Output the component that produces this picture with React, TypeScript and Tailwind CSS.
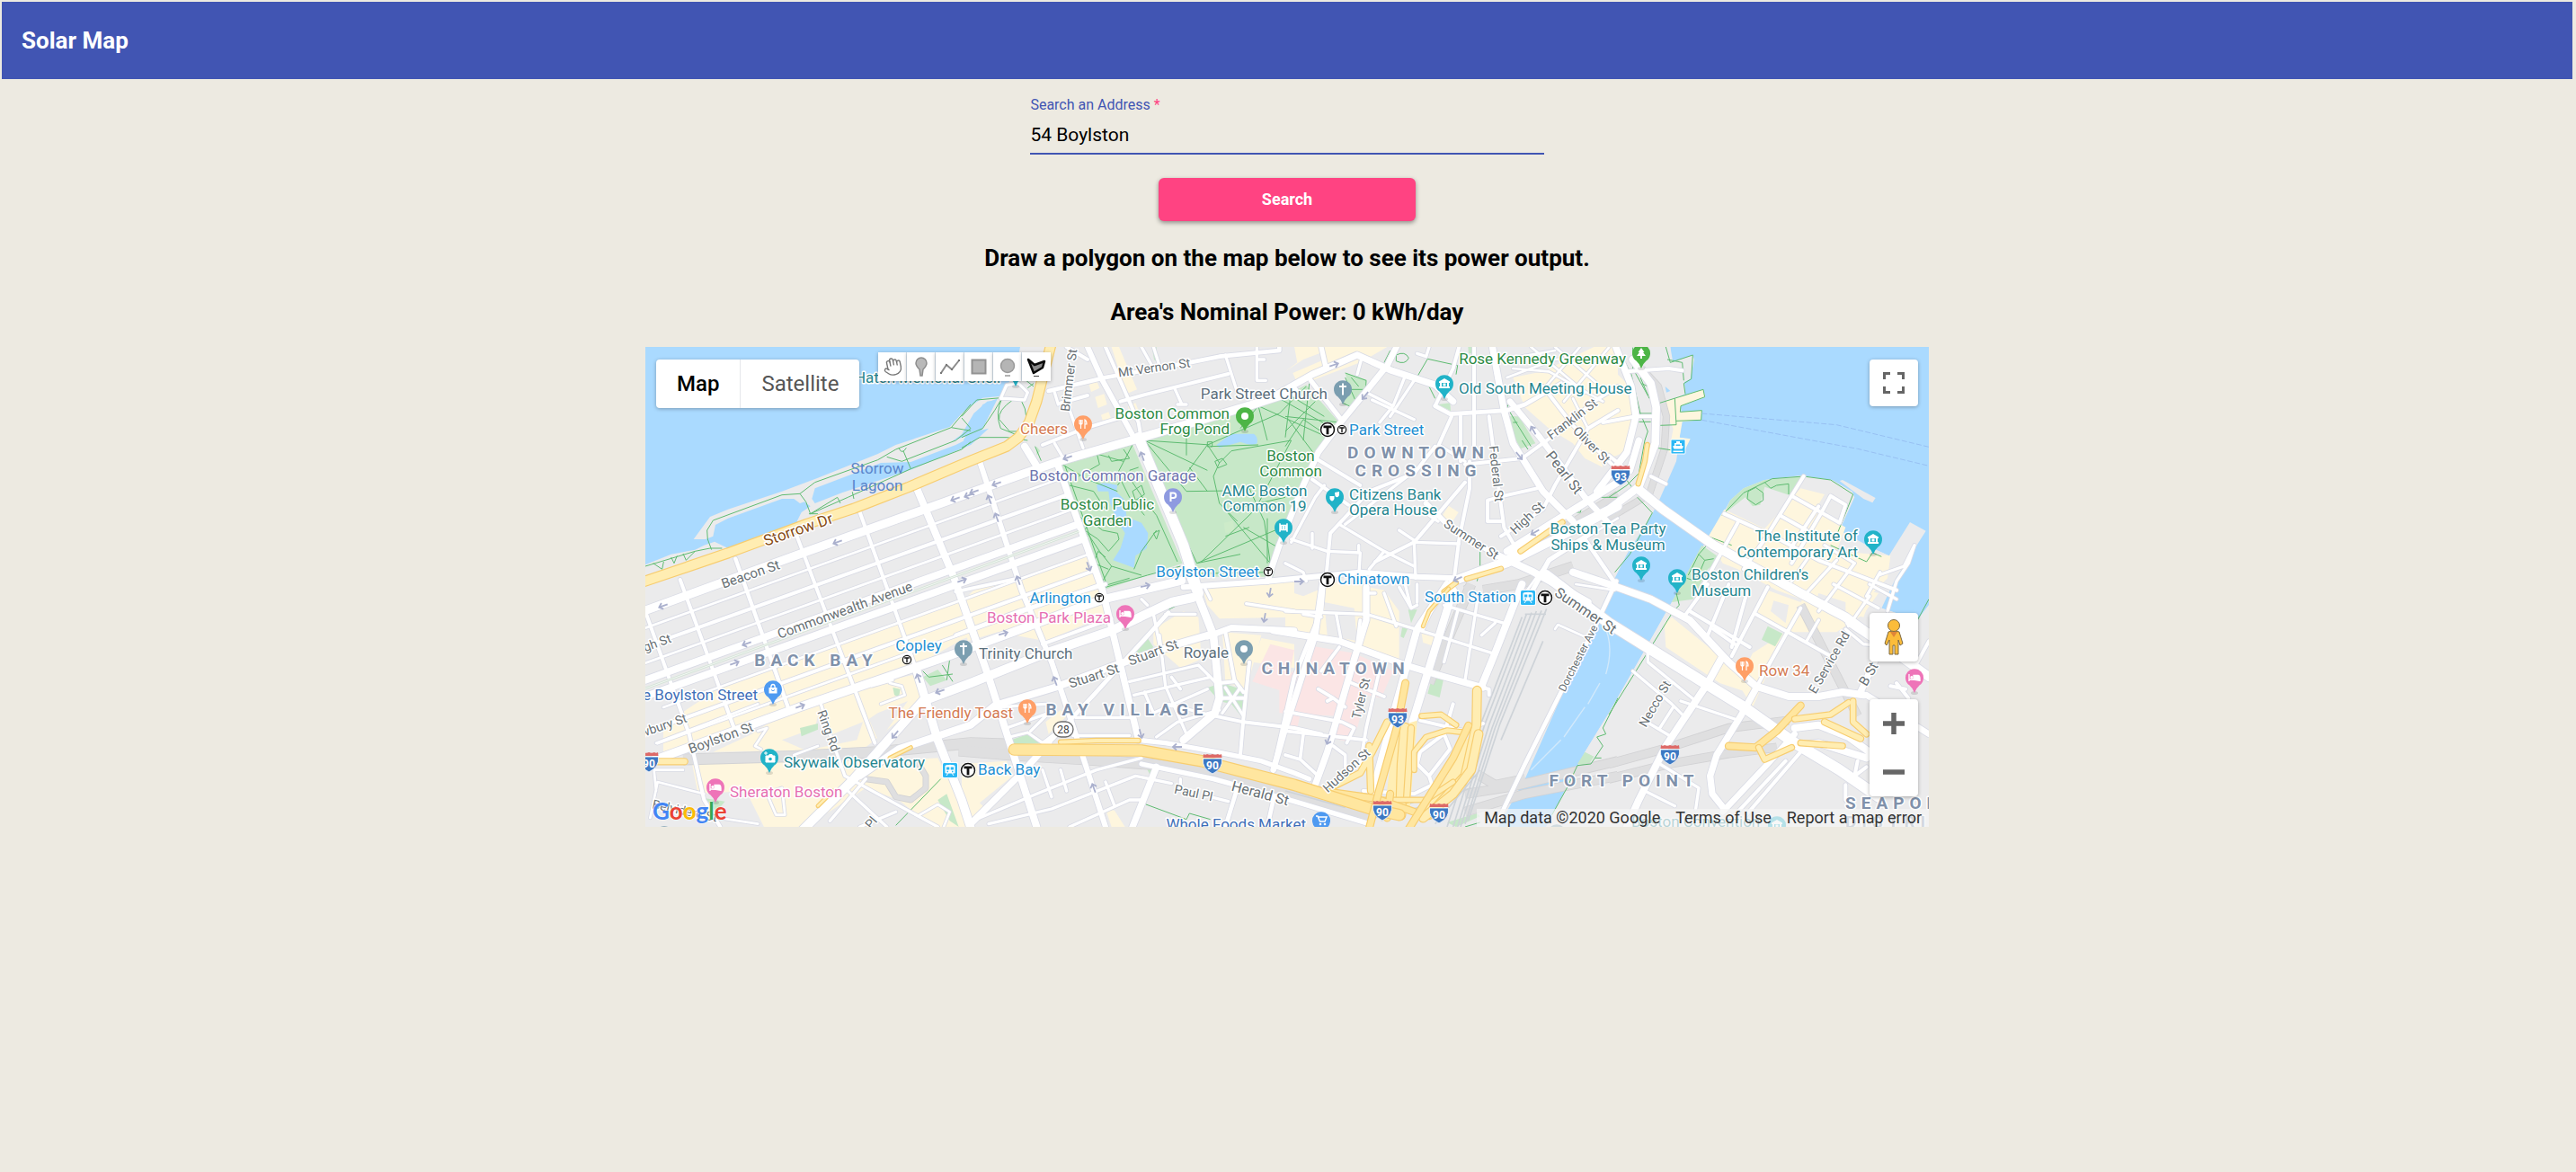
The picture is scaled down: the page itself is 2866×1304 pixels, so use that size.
import React from "react";
import { Hand } from "lucide-react";

/* The map geometry is drawn in sheets; each sheet has its own origin. */
type Sheet = "G" | "A1" | "A2" | "A3" | "A4" | "B1" | "B2" | "B3" | "B4";
const ORIGIN: Record<Sheet, string> = {
  G: "translate(0 0)",
  A1: "translate(-24 -18)",
  A2: "translate(1056 -18)",
  A3: "translate(2136 -18)",
  A4: "translate(3216 -18)",
  B1: "translate(-24 792)",
  B2: "translate(1056 792)",
  B3: "translate(2136 792)",
  B4: "translate(3216 792)",
};

const WATER = "#aadaff";
const LAND = "#ebebec";
const PARK = "#c7e8c8";
const SHOP = "#fef6de";
const RAIL = "#dfdfe0";

type Area = [Sheet, string, string];
type Line = [Sheet, number, string];

const AREAS: Area[] = [
  // Charles River and the esplanade
  ["A1", WATER, "M24,18H1375L1340,130 1300,270 1240,330 1110,385 900,470 700,540 560,595 300,695 24,790Z"],
  ["A1", LAND, "M185,660 240,585 300,560 480,500 600,455 800,375 860,345 1040,285 1080,240 1110,215 1150,188 1205,183 1235,140 1260,95 1275,18H1400L1320,300 1230,350 1110,400 900,490 560,610 530,600 545,570 575,550 555,535 540,540 520,525 480,525 300,590 258,612 250,650 225,660Z"],
  ["A1", LAND, "M24,745 110,710 190,695 220,680 255,668 300,690 60,790 24,800Z"],
  ["A1", WATER, "M580,525 590,490 720,440 810,405 910,402 1060,345 1110,320 1140,280 1180,220 1195,195 1165,200 1120,240 1080,310 1045,335 1130,300 1170,290 1110,345 910,428 680,505 590,540Z"],
  ["A1", WATER, "M1085,330 1110,290 1150,210 1200,190 1150,290 1110,345Z"],
  // Back Bay shopping strips
  ["G", SHOP, "M60,1262 260,1130 1480,690 1528,812 1440,838 1060,975 860,1090 520,1205 60,1375Z"],
  ["B1", SHOP, "M380,500 470,440 600,400 790,330 930,300 950,360 900,430 740,560 500,555 250,560Z"],
  ["B1", LAND, "M480,520 590,480 600,440 620,470 650,500 750,460 730,520 560,555Z"],
  ["B1", SHOP, "M180,600 700,590 830,590 1000,580 1060,700 1110,720 1110,810 980,810 870,720 760,680 560,810 420,810 360,690 200,700Z"],
  ["B1", LAND, "M280,730 360,710 390,810 270,810Z"],
  ["B1", LAND, "M800,430 900,390 820,500 800,520 770,450Z"],
  ["B1", PARK, "M950,310 1000,285 1030,320 975,340Z M850,345 875,350 870,378 855,370Z M540,480 600,465 600,485 545,508Z M1000,720 1030,700 1070,810 1040,790Z M225,715 290,725 260,760Z"],
  ["B2", SHOP, "M0,60 40,20 140,-10 190,60 280,40 460,-10 490,100 280,190 120,160 20,190Z"],
  ["B2", SHOP, "M640,150 740,90 790,110 800,250 730,280 640,200Z M800,0 1110,-10 1110,110 860,115 820,70Z M870,160 1000,170 950,350 880,330Z M1000,180 1110,200 1110,280 970,260Z"],
  ["B2", SHOP, "M280,460 330,420 350,440 290,500Z M0,600 150,590 170,640 60,730 80,750 30,810 0,810Z M480,750 510,755 545,810 500,810Z"],
  ["B2", PARK, "M165,520 220,500 265,530 175,535Z M580,230 620,180 640,210 600,240Z M820,345 870,330 945,355 940,450 900,400 860,390Z M615,610 640,610 630,640Z"],
  // Public Garden and the Common
  ["A2", PARK, "M325,405 568,338 737,740 470,830Z"],
  ["A2", PARK, "M605,325 780,275 1060,190 1150,145 1255,265 1190,360 1140,460 1080,600 1040,785 785,785 735,650Z"],
  ["A2", "#cdebc9", "M875,605 905,598 912,632 880,640Z"],
  ["A2", WATER, "M450,480Q470,465 520,480L515,500 545,530 550,585 600,605 622,640 618,690 580,715 575,755 505,730 530,690 545,640 520,600 495,540 490,500 455,500Z"],
  ["A2", WATER, "M850,345 900,308 975,308Q990,318 986,340 970,350 930,335L860,355Z"],
  ["A2", PARK, "M635,18 650,18 652,70 642,60Z M250,350 262,365 250,380Z"],
  ["A2", SHOP, "M500,18 525,18 585,160 550,175Z M425,145 450,130 460,155 432,168Z M445,185 475,175 485,210 455,222Z M465,245 490,235 500,262 472,268Z M555,215 580,205 590,230 560,240Z M1080,100 1140,60 1250,18H1110L1120,70Z"],
  // Downtown
  ["A3", SHOP, "M25,105 130,60 120,18H340L250,70 90,130 40,140Z M760,120 860,100 1030,18 1110,18 1110,230 1020,250 1060,420 1000,390 960,340 880,290 800,220Z"],
  ["A3", SHOP, "M525,580 545,548 578,570 560,598 540,600Z"],
  ["A3", PARK, "M200,105 272,128 262,165 225,220 190,205 215,160Z M740,250 780,250 835,340 785,358 760,310Z M510,210 550,205 552,232Z M610,18H625V40H612Z"],
  // Chinatown and the medical area
  ["B3", SHOP, "M0,20 60,40 180,-10 330,20 380,90 380,250 250,210 60,180 0,170Z M455,165 500,170 490,205 460,195Z"],
  ["B3", LAND, "M130,60 230,80 240,190 140,170Z"],
  ["B3", "#fbe5e5", "M80,205 230,230 360,290 320,380 270,370 240,480 205,525 165,515 180,440 -20,430 -20,320 60,270Z M10,430 50,435 40,480 5,480Z"],
  ["B2", "#fbe5e5", "M1030,200 1110,220 1080,360 970,325Z"],
  ["B3", PARK, "M490,310 528,318 515,378 475,365Z M390,145 410,145 395,180 385,175Z M410,85 440,85 420,130Z"],
  // Harbor and Fort Point Channel
  ["A4", WATER, "M205,18H1068V880L1030,930 880,880 955,790 935,715 880,690 700,700 380,600 330,655 265,780 210,870 120,1030 0,1240 -80,1370 -210,1620H-370L-280,1460 -60,960 20,790 60,710 145,575 170,525 225,400 245,250Z"],
  ["A4", LAND, "M180,18H205L208,70 280,45 285,60 272,125 252,135 255,175 200,200 170,120Z"],
  ["A4", SHOP, "M170,205 315,160 322,185 240,215 238,235 310,230 308,262 245,268 236,320 272,325 250,370 200,370 215,290Z M-110,120 -20,60 60,140 90,250 50,370 -20,400 -110,230Z"],
  ["A4", WATER, "M188,150 205,165 192,170Z"],
  ["A4", LAND, "M378,580 405,530 450,490 520,462 640,447 745,462 812,500 820,520 770,630 880,690 935,715 1005,603 1058,632 955,795 910,890 1030,930 1068,880 1068,1700 -210,1700 -80,1370 0,1240 120,1030 210,870 265,780 330,655Z"],
  ["A4", LAND, "M770,465 780,462 890,522 880,538 850,525Z"],
  ["A4", PARK, "M405,530 450,490 520,462 650,450 610,515 520,485 505,545 480,550 455,520 385,575Z"],
  ["A4", SHOP, "M330,655 385,560 520,625 640,490 720,510 690,560 790,620 760,700 940,715 930,790 880,840 850,920 700,880 560,830 430,760 380,740Z"],
  ["A4", PARK, "M310,680 375,725 330,760 280,860 210,870Z"],
  ["B4", SHOP, "M185,130 210,110 370,240 490,350 460,360 370,330 190,210Z M530,20 640,60 700,-20 900,30 850,100 760,160 600,160 490,100Z M480,230 590,160 480,410 430,330Z"],
  ["B4", LAND, "M550,55 600,70 590,130 540,90Z M700,30 790,60 790,100 690,60Z"],
  ["B4", PARK, "M530,140 580,165 555,208 510,185Z"],
  ["B3", PARK, "M1000,560 1030,575 1010,605 975,600Z M540,795 640,765 650,775 570,810Z"],
];

const RAILS: Line[] = [
  ["B1", 34, "M150,585 500,575 800,560 1110,530 1250,535"],
  ["B2", 34, "M-10,555 170,570 420,585 620,600 840,620 1110,710 1360,780"],
  ["B4", 30, "M-420,20 -300,0 -120,-60 M-460,0 -600,330"],
  ["B4", 26, "M-460,10 -480,20 M0,600 200,545 400,480 600,455"],
  ["B4", 26, "M0,650 200,600 400,565 560,545 M640,70 830,440"],
  ["B3", 28, "M600,700 760,675 1110,590 M600,760 800,700 1110,640 M650,640 700,670 800,650"],
  ["A4", 20, "M110,90 165,150 192,250 185,360 135,510 0,590"],
  ["A3", 22, "M760,740 900,640 1110,510"],
  ["B1", 16, "M760,650 830,660 860,710 910,720 960,680 960,640 930,590"],
];

const TRACKS = [
  "M790,110 655,460 540,810", "M805,100 665,470 560,810", "M822,95 680,470 575,810",
  "M838,90 690,480 585,810", "M855,88 700,480 600,800", "M872,82 715,470 610,790",
  "M860,190 720,520", "M800,100H870", "M0,660 280,745 M0,675 280,760 M0,690 200,745",
  "M300,780 640,640 M320,790 620,680 M500,800 650,620",
];

const ROADS: Line[] = [
  // Back Bay, along the river
  ["G", 8, "M0,938 1392,437"], ["G", 12, "M0,1000 1412,492"], ["G", 8, "M0,1055 1429,541"],
  ["G", 24, "M0,1112 1447,591"], ["G", 24, "M0,1167 1464,640"], ["G", 8, "M60,1203 1483,691"],
  ["G", 12, "M0,1286 1502,745"], ["G", 8, "M40,1324 1519,791"], ["G", 28, "M0,1390 516,1202 1016,1030 1420,880 1526,843 1790,780"],
  ["G", 28, "M0,880 536,684 1266,422 1396,377 1636,308 1836,250 2016,196 2166,147"],
  // Back Bay, across
  ["G", 12, "M-4,872 146,1292 196,1512 250,1602"], ["G", 12, "M116,777 296,1272"], ["G", 13, "M301,707 476,1202"],
  ["G", 12, "M506,632 766,1322"], ["G", 12, "M716,552 906,1082"], ["G", 28, "M906,1082 976,1312 1056,1512 1085,1602"],
  ["G", 24, "M906,472 1030,770 1146,1102 1306,1602"], ["G", 18, "M1116,382 1256,812 1356,1052 1436,1292 1536,1602"],
  ["G", 24, "M1266,332 1306,397"], ["G", 22, "M1376,392 1526,812 1646,1312"],
  // South of Boylston
  ["B1", 30, "M540,830 720,650 950,390 1110,330 1360,230 1580,155 1780,60 1850,45"],
  ["B1", 24, "M740,640 870,550 1110,470 1190,405 1390,345 1580,275 1800,200 1920,165"],
  ["B1", 10, "M610,400 640,500 690,640 M690,640 1000,810 M760,650 640,790 M700,690 830,810 M860,760 740,810"],
  ["B1", 8, "M60,530 400,400 M55,620H150 M65,660 220,700 M65,660 40,780 M60,690 50,590 M450,690 480,680 490,770 460,770 430,700 M400,490 430,480 390,540 410,550 M520,570 600,540 M940,770 1000,735 1040,760 1020,810 M270,780 400,800 M780,340 850,320 M810,400 890,370 880,340 840,330"],
  ["B2", 14, "M290,530 440,370 540,260 690,95"], ["B2", 26, "M765,-20 840,170 860,380 845,430 740,520"],
  ["B2", 20, "M820,175 900,145 1110,155"], ["B2", 12, "M270,200 500,115 M-20,25 190,-20 M-20,170 190,90 480,0"],
  ["B2", 10, "M380,445H570 M370,505H560 M560,325 790,270 850,330 M575,370 830,310 M610,360 640,430 820,350 M660,170 680,340 750,500 M690,400 840,440 M700,310 730,350 M650,510 720,460 860,420 M640,100 660,200 670,250 M680,100H780"],
  ["B2", 10, "M150,480 290,430 M160,510 220,495 270,530 310,500 M230,490 290,430 M130,410 280,400"],
  ["B2", 12, "M845,440 940,460 1110,480 1200,500 M940,450 930,570 M960,260 940,450 M880,160 910,320 940,360 M860,330 910,325 M870,380H940"],
  ["B2", 10, "M880,345 940,440 M930,345 870,430 M600,50 620,70 M810,10 830,50 M950,65 1110,90"],
  ["B2", 16, "M590,520 680,530 850,560 1000,590 1110,630 1160,650"], ["B2", 16, "M600,600 840,650 1110,725 1360,800"],
  ["B2", 10, "M60,780 250,700 450,620 600,580 M90,800 300,750 580,640 700,665 M270,620 300,710 M330,620 350,690 M480,660 510,740 M360,810 560,720 610,720 M730,650 730,690 M830,710 890,725"],
  ["B2", 22, "M30,800 210,620 290,530 M650,610 570,810"], ["B2", 14, "M920,680 880,810 M1040,720 1020,810"],
  ["B2", 14, "M1040,620 1110,310 1200,90 1210,-30"],
  // Beacon Hill
  ["A2", 14, "M290,165 480,120 760,70 860,50 1060,30V18"], ["A2", 12, "M270,345 410,290 560,245 M330,205 420,180 M530,200 620,175 890,108"],
  ["A2", 18, "M420,18 470,130 580,330"], ["A2", 12, "M480,18 590,270 600,330 M350,18 420,60"],
  ["A2", 10, "M350,200 405,355 M310,170 322,210 M310,340 345,400 M600,18 640,90 M710,155 735,210 M720,210H750 M880,45 920,170 M985,18V130H1015 M985,60H1010 M390,380 690,300 M640,18 660,80"],
  ["A2", 34, "M590,320 740,680 790,840"], ["A2", 10, "M130,190 150,145 190,140 220,170 210,195 150,190Z"],
  // Downtown
  ["A3", 22, "M-60,195 90,110 240,45 350,95 500,145 560,200"], ["A3", 20, "M375,10 340,80 185,270 110,370 60,480 -20,680 -60,800"],
  ["A3", 16, "M85,130 190,265 M118,10 135,85"],
  ["A3", 10, "M255,55 240,110 M400,115 360,215 315,270 M280,175 360,215 M290,195 430,260 M430,130 350,250 M440,40 470,50 480,18"],
  ["A3", 14, "M500,215 550,242 740,230 800,210 920,140"], ["A3", 12, "M500,215 560,90 580,18 M630,10V390 M555,250 510,350 M585,250V400"],
  ["A3", 22, "M690,10 730,230 760,340 860,500 960,600"], ["A3", 12, "M680,250 700,400 730,620 770,690 M600,410 790,390 900,310 1030,200 1110,150"],
  ["A3", 12, "M615,400V490L580,660 565,780 M600,470 430,670 300,735 M110,395 250,480 M90,460 210,545 M500,350 430,440 280,500 150,640 135,800"],
  ["A3", 10, "M420,440 200,610 M520,350 600,400 M510,600 450,560 M380,630 440,670 M180,610 330,700 430,750 M430,670 580,675 M430,670 435,790 M330,700 280,760 M20,660 140,700 250,705 245,790 M90,640V690 M0,740 60,770 70,800 M20,670 100,520 130,480 M245,680V700"],
  ["A3", 18, "M470,540 550,620 700,710"], ["A3", 18, "M-340,820 -60,800 250,770 440,785 570,790 730,730 900,620"],
  ["A3", 28, "M560,800 740,740 980,620 1110,550"], ["A3", 24, "M700,710 830,770 1010,870"],
  ["A3", 24, "M740,700 900,600 1110,470"], ["A3", 20, "M750,200 850,320 1000,520 1110,640"],
  ["A3", 12, "M860,150 960,280 1080,400 1130,450 M840,490 730,515 675,530V600H725 M720,650 860,560 900,480 1010,290 1110,230"],
  ["A3", 8, "M740,120 900,60 1110,50 M760,90 880,100 1060,200 M820,18 1000,170 M900,18 1040,140 M990,10 870,150 M1080,20 930,200 M960,190 1010,290 M730,60 900,30 M800,840 880,730 1110,590 M970,810 1100,830"],
  ["A3", 16, "M820,840 880,730 1020,640"], ["A3", 14, "M1000,660 1110,820"],
  // Chinatown and the artery
  ["B3", 22, "M-40,155 180,190 400,270 500,300 660,345"], ["B3", 20, "M125,-10 100,170 0,480 -40,620"], ["B3", 22, "M270,10 270,120 230,250 140,560 100,670"],
  ["B3", 24, "M540,0 440,150 370,400 290,700"], ["B3", 26, "M560,20 480,280 425,460"], ["B3", 24, "M790,0 700,230 655,340"],
  ["B3", 10, "M0,90 270,100 500,170 690,230 M575,90 530,260 M640,60 600,320 M530,70 730,130 M700,130 655,170 M330,30 370,140 M400,0 420,80 M170,100 185,180 M120,110 60,100 M380,10 420,80 440,70 M440,0V60 M500,60 460,150 M270,30H300"],
  ["B3", 11, "M325,240 270,480 250,600 M210,325 330,375 M0,425 190,460 M0,490 270,520 M190,460 230,480 205,530 M60,500 50,580 M0,570 50,585 110,640 M180,210 120,290 M110,350 160,380 M160,380 140,390 M160,380 200,410 M160,540 200,570 200,610 M250,120 240,200"],
  ["B3", 12, "M560,400 530,500 550,550 480,640 440,600 450,560 530,500 M480,640 490,670 430,700 260,690"],
  ["B3", 12, "M450,455 600,490 660,465 M680,370V350L650,345"],
  ["B3", 8, "M900,150 910,135 1010,180"], ["B3", 14, "M1105,-10 1030,150 920,360 800,600 710,790"],
  // Waterfront
  ["A4", 22, "M20,10 75,150 90,250 60,370 -40,500"], ["A4", 26, "M80,60 140,140 158,220 155,340 100,485 0,560 -120,620"],
  ["A4", 22, "M100,330 70,430"], ["A4", 12, "M60,100 200,90 245,97 M90,250H160 M140,450 190,475 M0,380 60,430 M-20,270 90,250"],
  ["A4", 30, "M95,490 180,560 350,680 640,840 790,920 1070,1120"], ["A4", 12, "M385,575 540,645 700,730 960,830"],
  ["A4", 12, "M650,450 520,660 450,760 M430,605 300,840 M610,515 770,605 790,545 740,515 710,570 610,740 M570,580 660,630 M700,550 600,700"],
  ["A4", 10, "M820,740 700,900 M905,770 860,850 M1020,680 1000,740 960,800 930,900 M1020,680 985,750 900,780 M720,680 820,740 M760,730 650,850 M680,700 610,800"],
  // Fort Point
  ["B4", 24, "M-120,-40 0,0 140,50 270,120 400,260 490,340 600,375 700,375 780,360 850,370"],
  ["B4", 36, "M-210,-30 0,130 120,205 320,330 450,410 620,530 770,620 900,710"],
  ["B4", 24, "M380,240 330,330 190,540 100,720 60,810"], ["B4", 22, "M490,350 440,440 360,570 338,640 345,700 385,750"], ["B4", 20, "M620,500 530,600 380,760"],
  ["B4", 12, "M330,0 250,110 M270,90 470,210 M400,0 330,170 M460,30 410,210 M530,10 410,240 M490,100 740,240 M640,80 500,330 M350,150 420,200"],
  ["B4", 10, "M80,290 210,400 250,440 M130,220V260L290,390 M240,390 420,450 M110,450 210,510 M215,410 170,480 M170,600 300,680 290,750 M120,690 220,740 M750,0 900,80 M870,40 800,140 M870,0 960,50 M700,120 660,190 M790,150 850,200 M850,200 950,210"],
  ["B4", 22, "M840,360 890,250"], ["B4", 24, "M620,540 700,530 860,580 M620,480 700,470 800,510 870,560"],
  ["B4", 20, "M800,130 1070,310 M860,370 1068,500"], ["B4", 12, "M640,560 450,780 M590,590 430,760 M1068,190 1030,260 M960,330 1000,380 M940,340 990,350 M830,590 820,640 860,610 M790,670V720"],
];

const HIGHWAYS: Line[] = [
  ["A1", 30, "M20,801 300,706 560,610 720,557 900,487 1110,398 1230,350 1270,320 1305,270 1330,200 1355,100 1378,10"],
  ["B1", 18, "M60,592H155"],
  ["B2", 12, "M330,527 450,522 590,522"],
  ["B3", 26, "M640,355 638,470 600,640 480,770"],
  ["B3", 30, "M400,480 390,600 385,770"], ["B3", 18, "M420,480 410,640 405,720"],
  ["B3", 14, "M430,620 430,560 470,510 540,488 600,495 M455,440 520,435 570,470"],
  ["B3", 18, "M340,460 290,560 250,630 150,680 M280,540 285,690"],
  ["B3", 26, "M645,500 620,620 560,700 460,780"], ["B3", 14, "M560,660 470,720 300,720"],
  ["B3", 20, "M120,690 300,715 430,760 M350,700 340,780"],
  ["B2", 34, "M175,552 600,555 800,590 1110,670 1360,748 1460,770"],
  ["B3", 20, "M401,330 372,480 310,700 280,815"], ["B3", 20, "M611,472 560,580 410,820"],
  ["A3", 14, "M785,700 925,603"], ["A3", 12, "M605,792 720,758 M570,805 530,835"], ["A4", 12, "M128,345 120,400 98,475"],
  ["B3", 8, "M545,15 480,90 460,140"], ["B4", 20, "M400,540 490,545 560,490 640,405"], ["B4", 16, "M620,450 740,435 800,395 M815,390V460L860,500"],
  ["B4", 18, "M720,460 840,515"], ["B4", 16, "M640,530 780,540 M500,545 520,585 610,545"], ["B1", 8, "M840,580 910,545 M600,740 650,690"],
];

const PATHS: [Sheet, string][] = [
  ["A1", "M24,750 190,700 240,690 280,690 M232,660 230,630 250,597 480,512 540,508 590,470 800,395 860,360 1045,287 1110,210 M232,660 245,695 M540,508 560,535 575,575 700,520 910,425 1080,360 1110,335 M830,385 880,400 1060,330 1110,290 1080,255 M1045,287 1110,298 M885,365 910,425 M870,355 Q880,380 895,355 M50,740 80,760 85,735 M110,720 120,740 130,715 M150,708 160,730 190,700 M575,575 665,520 675,540 M715,502 720,525 M600,575H570"],
  ["A2", "M0,250 50,195 130,188 M0,320 70,290 110,230 135,188 Q110,240 130,290 L180,310 M170,195 Q120,230 125,260 L160,300 200,300 Q230,250 200,200 M0,355 60,320 150,320 220,330 M245,350 265,398 M215,130 240,150 M220,155 240,140"],
  ["A2", "M335,410 565,345 M345,415 480,800 M335,410 420,460 520,500 M450,370 460,410 390,450 M490,380 500,400 560,390 540,360 M450,375 540,400 M520,480 550,440 610,530 650,580 720,735 M570,345 520,440 560,520 610,580 M570,500 600,480 610,510 580,530Z M560,430 590,420 M470,800 500,750 600,780 M500,750 460,700 420,640 M455,660 410,630 430,600 470,630 520,640 525,660 490,700Z M440,740 490,760 M440,740 455,700 480,720 M360,480 440,500 480,560 M370,530 440,560 M650,630 600,700 575,760 M640,640 660,630 650,660Z M380,570 420,610 M480,820 620,780 730,750"],
  ["A2", "M610,330 820,430 M610,330 750,500 900,498 M610,330 830,345 M750,290V380 M820,345 750,440 M820,345 1060,240 1150,150 M820,345 860,405 840,450 860,540 920,600 M845,400 870,390 885,410 855,422Z M860,405 900,365 1100,330 M990,215 1020,330 M990,215 930,290 M990,215 1200,310 M1060,190 1240,290 M1090,260 1180,380 M830,350 990,345 M820,500 760,420 M700,560 785,740 M785,740 1070,620 M785,740 930,710 M800,735 980,560 1100,330 M870,550 1030,740 M1030,740 1010,600 960,490 M900,560 1080,520 M940,620 1060,690 M1020,740 1020,590 M780,775 1030,770 M880,650 960,620 M820,335h16v16h-16Z"],
  ["A3", "M0,170 130,250 M0,250 180,270 M20,160 0,320 M80,140 60,330 M100,200 0,300 M0,350 60,260 120,300 M200,105 270,130 Q275,160 225,220 L190,205 M200,120 240,210 M215,160H265 M220,120 245,150 M350,30 330,70 M370,45Q400,30 412,55 Q400,80 370,65Z M355,85 440,118 500,145 540,160 M440,118 475,58 575,80 570,110 M480,150 500,190 M735,210 770,270 820,350 M750,200 735,230 M760,270H775 M790,330 810,360 M1020,520 1110,520 M950,570 985,570 990,545 M650,690 650,760 640,800"],
  ["A4", "M190,18 205,70 280,45 275,125 250,140 255,175 M195,60 245,70 250,130 M170,205 315,160 320,185 240,215 238,235 310,230 308,262 225,265 M170,280 225,278 220,190 M100,240H150 M100,268H140 M160,355 225,365 M75,110 105,240 130,300 120,330 100,440 60,480 0,520 M80,20V90L130,180 M105,120 135,190 M50,60 75,110 M110,140 130,150 M95,520 145,572 70,710 20,770 M50,450 80,490"],
  ["A4", "M378,580 450,505 545,458 650,450 740,462 815,510 765,635 M465,500 490,487 515,505 515,530 490,545 462,525Z M520,470 540,490 560,480 600,475 600,510 M330,650 410,680 M345,660 300,710 265,780 M300,710 320,730 350,725 M320,730 290,800 260,790 M740,680 860,735 880,705 910,718"],
  ["B4", "M225,30 235,70 215,90 0,435 M1068,50 1030,120"],
  ["B3", "M1110,380 1060,480 1070,500 1040,510 1060,540 1020,600 975,605 940,680 890,770 M1035,580H1055 M600,810 650,795"],
  ["B1", "M950,290 970,310 1050,300 M1015,270 1050,325 M1040,250 1030,320 M860,805 1010,650"],
  ["B2", "M460,10 560,-20 M615,735 750,785 760,765 830,785 M690,85 720,70"],
];

const FERRIES: [Sheet, string][] = [
  ["A4", "M310,240 760,278 1068,352"], ["A4", "M310,262 830,358 1068,415"],
];

const ARROWS: [number, number, number][] = [
  [214, 217, 160], [345, 169, 160], [360, 165, 160], [366, 161, 160], [391, 152, 160], [470, 123, 160],
  [383, 170, 250], [391, 190, 250], [415, 260, 250], [553, 122, 250], [493, 244, 70], [556, 266, -12],
  [20, 288, 160], [113, 330, 160], [99, 352, -20], [172, 400, -20], [304, 369, 250], [328, 383, 160],
  [278, 431, 130], [398, 319, -15], [456, 372, 250], [551, 430, 75], [592, 445, 180], [499, 491, 250],
  [689, 301, 100], [695, 273, 100], [766, 20, -18], [801, 54, 130], [988, 93, 240], [972, 121, 50],
  [990, 206, 150], [904, 258, 155], [727, 261, 0], [760, 437, 110], [352, 260, -20],
];

const GREEN = "fill-[#2c8a44]";
const TEAL = "fill-[#26868f]";
const SLATE = "fill-[#5c6f7c]";
const BLUE = "fill-[#1f8fd2]";
const ORANGE = "fill-[#d47a52]";
const PINK = "fill-[#e66fb2]";
const STREET = "fill-[#687074]";
const SHOPBLUE = "fill-[#3f6fb8]";

type Anchor = "start" | "middle" | "end";
const PLACES: [string, number, number, Anchor, string][] = [
  ["Hatch Memorial Shell", 314, 40, "middle", TEAL],
  ["Storrow", 258, 141, "middle", "fill-[#5a85cb]"], ["Lagoon", 258, 160, "middle", "fill-[#5a85cb]"],
  ["Park Street Church", 759, 58, "end", SLATE],
  ["Boston Common", 650, 80, "end", GREEN], ["Frog Pond", 650, 97, "end", GREEN],
  ["Cheers", 470, 97, "end", ORANGE],
  ["Boston Common Garage", 520, 149, "middle", "fill-[#6f75ae]"],
  ["Boston Public", 514, 181, "middle", GREEN], ["Garden", 514, 199, "middle", GREEN],
  ["Boston", 718, 127, "middle", GREEN], ["Common", 718, 144, "middle", GREEN],
  ["AMC Boston", 689, 166, "middle", TEAL], ["Common 19", 689, 183, "middle", TEAL],
  ["Boylston Street", 683, 256, "end", BLUE], ["Park Street", 783, 98, "start", BLUE],
  ["Citizens Bank", 783, 170, "start", TEAL], ["Opera House", 783, 187, "start", TEAL],
  ["Rose Kennedy Greenway", 1091, 19, "end", GREEN], ["Old South Meeting House", 905, 52, "start", TEAL],
  ["Chinatown", 770, 264, "start", BLUE],
  ["Boston Tea Party", 1071, 208, "middle", TEAL], ["Ships & Museum", 1071, 226, "middle", TEAL],
  ["The Institute of", 1349, 216, "end", TEAL], ["Contemporary Art", 1349, 234, "end", TEAL],
  ["Boston Children's", 1164, 259, "start", TEAL], ["Museum", 1164, 277, "start", TEAL],
  ["Copley", 304, 338, "middle", BLUE], ["e Boylston Street", 125, 393, "end", SHOPBLUE],
  ["The Friendly Toast", 409, 413, "end", ORANGE], ["Skywalk Observatory", 154, 468, "start", TEAL],
  ["Sheraton Boston", 94, 501, "start", PINK], ["Trinity Church", 371, 347, "start", SLATE],
  ["Arlington", 496, 285, "end", BLUE], ["Boston Park Plaza", 518, 307, "end", PINK],
  ["Royale", 649, 346, "end", SLATE], ["Back Bay", 370, 476, "start", BLUE],
  ["Whole Foods Market", 735, 537, "end", SHOPBLUE], ["South Station", 969, 284, "end", BLUE],
  ["Row 34", 1239, 366, "start", ORANGE], ["Boston Convention", 1097, 534, "start", TEAL],
];

const DISTRICTS: [string, number, number, Anchor][] = [
  ["DOWNTOWN", 860, 124, "middle"], ["CROSSING", 860, 144, "middle"], ["BACK BAY", 190, 355, "middle"],
  ["BAY VILLAGE", 536, 410, "middle"], ["CHINATOWN", 768, 364, "middle"], ["FORT POINT", 1089, 489, "middle"],
  ["SEAPORT", 1335, 514, "start"], ["DISTRICT", 1335, 535, "start"],
];

const STREETS: [string, number, number, number, string][] = [
  ["Beacon St", 117, 253, -19, "text-[15px]"], ["Commonwealth Avenue", 222, 293, -20, "text-[15px]"],
  ["gh St", 13, 329, -20, "text-[14px]"], ["wbury St", 20, 421, -19, "text-[14px]"],
  ["Boylston St", 84, 435, -20, "text-[15px]"], ["Ring Rd", 204, 427, 70, "text-[14px]"],
  ["Belvidere St", 44, 516, 12, "text-[14px]"], ["Pl", 251, 529, -50, "text-[14px]"],
  ["Brimmer St", 471, 37, -83, "text-[14px]"], ["Mt Vernon St", 566, 23, -8, "text-[14px]"],
  ["Federal St", 947, 141, 84, "text-[14px]"], ["Franklin St", 1031, 80, -37, "text-[14px]"],
  ["Oliver St", 1053, 109, 45, "text-[14px]"], ["Pearl St", 1022, 140, 52, "text-[16px]"],
  ["High St", 981, 190, -43, "text-[14px]"], ["Summer St", 919, 214, 33, "text-[14px]"],
  ["Stuart St", 499, 366, -18, "text-[15px]"], ["Stuart St", 565, 340, -20, "text-[15px]"],
  ["Paul Pl", 610, 496, 12, "text-[14px]"], ["Herald St", 684, 497, 15, "text-[16px]"],
  ["Tyler St", 796, 391, -76, "text-[14px]"], ["Hudson St", 780, 471, -42, "text-[14px]"],
  ["Dorchester Ave", 1037, 346, -63, "text-[12px]"], ["Summer St", 1046, 294, 34, "text-[16px]"],
  ["E Service Rd", 1317, 351, -60, "text-[14px]"], ["B St", 1361, 364, -60, "text-[15px]"],
  ["Necco St", 1123, 397, -60, "text-[14px]"],
];

type Glyph = "food" | "dot" | "P" | "film" | "museum" | "cross" | "mask" | "tree" | "bag" | "camera" | "bed" | "cart";
const PIN: Record<string, string> = {
  orange: "#ff9f67", green: "#4db546", purple: "#8e9ae0", teal: "#21b3c8",
  slate: "#7b9eb0", blue: "#4e9af1", pink: "#ee74b8",
};
const PINS: [number, number, string, Glyph][] = [
  [412, 27, "teal", "dot"], [487, 86, "orange", "food"], [667, 77, "green", "dot"], [587, 167, "purple", "P"],
  [710, 201, "teal", "film"], [889, 41, "teal", "museum"], [776, 47, "slate", "cross"], [767, 167, "teal", "mask"],
  [1108, 7, "green", "tree"], [1108, 243, "teal", "museum"], [1148, 257, "teal", "museum"], [1366, 214, "teal", "museum"],
  [142, 381, "blue", "bag"], [354, 336, "slate", "cross"], [138, 457, "teal", "camera"], [78, 490, "pink", "bed"],
  [21, 543, "slate", "dot"], [534, 297, "pink", "bed"], [425, 402, "orange", "food"], [666, 336, "slate", "dot"],
  [752, 527, "blue", "cart"], [1223, 355, "orange", "food"], [1412, 368, "pink", "bed"], [1259, 532, "teal", "museum"],
  [1014, 541, "slate", "dot"],
];

const GLYPHS: Record<Glyph, React.ReactNode> = {
  food: <path d="M-4 -5v4q0 1 1.500 1v5M-2.500 -5v5M-1 -5v4q0 1 -1.500 1M2 5v-10q2 1 2 5h-2" stroke="#fff" strokeWidth="1.200" fill="none" />,
  dot: <circle r="4" fill="#fff" />,
  P: <path d="M-2.500 5v-9.500h3a2.800 2.800 0 0 1 0 5.600h-3" stroke="#fff" strokeWidth="2" fill="none" />,
  film: <path d="M-5 -5h2v1.500h6v-1.500h2v10h-2v-1.500h-6v1.500h-2zM-1.500 -2v4M1.500 -2v4" fill="#fff" stroke="#21b3c8" strokeWidth=".5" />,
  museum: <path d="M0 -6l6 3.500v1.500h-12v-1.500zM-5 -1h2v4h6v-4h2v4h1v2h-12v-2h1zM-1.500 -.5h3v3h-3z" fill="#fff" />,
  cross: <path d="M0 -6.500v13M-4 -3h8" stroke="#fff" strokeWidth="2" />,
  mask: <path d="M-5.500 -1h5v3q-2.500 5 -5 0zM0 -5l5 -1v4q-2 4 -4.500 1z" fill="#fff" />,
  tree: <path d="M0 -6l3.500 5h-1.500l3 4h-4v3h-2v-3h-4l3 -4h-1.500z" fill="#fff" />,
  bag: (
    <g>
      <path d="M-4.500 -2h9v6.500h-9z" fill="#fff" />
      <path d="M-2.200 -2q0 -3.500 2.200 -3.500t2.200 3.500" fill="none" stroke="#fff" strokeWidth="1.300" />
      <path d="M-2 .5q2 2.500 4 0" fill="none" stroke="#4e9af1" />
    </g>
  ),
  camera: <g><path d="M-4 -2h3l1 -1.500h3l1 1.500h2v7h-10zM-6 -5h4M-4 -7v4" fill="#fff" stroke="#fff" /><circle cx="1" cy="1.500" r="1.800" fill="#21b3c8" /></g>,
  bed: <g><path d="M-6 -4v8M-6 2h12v2M-1 -2.500h5q2 0 2 4h-7z" stroke="#fff" strokeWidth="1.300" fill="#fff" /><circle cx="-3.200" cy="-.5" r="1.500" fill="#fff" /></g>,
  cart: <g><path d="M-6 -5h2l2.500 6h5.500l2 -5h-9" stroke="#fff" strokeWidth="1.400" fill="none" /><circle cx="-1" cy="4" r="1.300" fill="#fff" /><circle cx="4" cy="4" r="1.300" fill="#fff" /></g>,
};

function MapPin({ x, y, color, glyph }: { x: number; y: number; color: string; glyph: Glyph }) {
  return (
    <g transform={`translate(${x} ${y})`}>
      <ellipse cy="17" rx="4" ry="2" fill="#000" opacity=".12" />
      <path d="M0 17Q-1.500 12 -5.500 8.500A10 10 0 1 1 5.500 8.500Q1.500 12 0 17Z" fill={PIN[color]} />
      {GLYPHS[glyph]}
    </g>
  );
}

function Subway({ x, y, small }: { x: number; y: number; small?: boolean }) {
  return (
    <g transform={`translate(${x} ${y})${small ? " scale(.62)" : ""}`}>
      <circle r="9" fill="#fff" />
      <circle r="7.500" fill="#fff" stroke="#111" strokeWidth={small ? 2 : 1.5} />
      <path d="M-4.500 -3.200h9M0 -3.200v8.500" stroke="#111" strokeWidth={small ? 2.2 : 2.8} />
    </g>
  );
}

function Train({ x, y }: { x: number; y: number }) {
  return (
    <g transform={`translate(${x} ${y})`}>
      <rect x="-9" y="-9" width="18" height="18" rx="2" fill="#fff" />
      <rect x="-8" y="-8" width="16" height="16" rx="1.500" fill="#2bb8f5" />
      <path d="M-5 -5q5 -1.500 10 0v8h-10zM-4 6l2 -3M4 6l-2 -3" fill="#fff" stroke="#fff" />
      <path d="M-4 -3.500h3.300v3h-3.300zM.7 -3.500h3.300v3h-3.300z" fill="#2bb8f5" />
      <path d="M-3.500 1.500h1.500M2 1.500h1.500" stroke="#2bb8f5" strokeWidth="1.300" />
    </g>
  );
}

function Shield({ x, y, n }: { x: number; y: number; n: string }) {
  return (
    <g transform={`translate(${x} ${y})`}>
      <path d="M-10.500 -6H10.500Q12 5 0 11 -12 5 -10.500 -6Z" fill="#3c78c3" stroke="#fff" strokeWidth=".8" />
      <path d="M-10 -11q2 1.500 4 0q3 1.500 6 0q3 1.500 6 0q2 1.500 4 0l.5 4h-21z" fill="#dd6a68" />
      <text y="6" textAnchor="middle" className="fill-white text-[12px] font-bold">{n}</text>
    </g>
  );
}

function CityMap() {
  return (
    <svg
      viewBox="0 0 1428 534"
      preserveAspectRatio="xMidYMid slice"
      role="img"
      aria-label="Street map of central Boston"
      className="block h-[534px] w-full"
    >
      <g transform="scale(.333333)" fill="none" strokeLinejoin="round">
        <rect width="4300" height="1610" fill={LAND} />
        {AREAS.map(([s, c, d], i) => <path key={i} transform={ORIGIN[s]} d={d} fill={c} />)}
        {RAILS.map(([s, w, d], i) => <path key={i} transform={ORIGIN[s]} d={d} stroke="#d2d2d4" strokeWidth={w + 5} />)}
        {RAILS.map(([s, w, d], i) => <path key={i} transform={ORIGIN[s]} d={d} stroke={RAIL} strokeWidth={w} />)}
        <g transform={ORIGIN.B3} stroke="#ced3d8" strokeWidth="5">{TRACKS.map((d) => <path key={d} d={d} />)}</g>
        <g stroke="#5dbb70" strokeWidth="3">{PATHS.map(([s, d], i) => <path key={i} transform={ORIGIN[s]} d={d} />)}</g>
        {FERRIES.map(([s, d]) => <path key={d} transform={ORIGIN[s]} d={d} stroke="#98c0f2" strokeWidth="3" strokeDasharray="18 7" />)}
        <path transform={ORIGIN.B3} d="M1060,130Q1100,200 1070,300M1050,330 1010,400M1000,410 930,510M920,520 820,620" stroke="#d2e9fb" strokeWidth="4" />
        <g strokeLinecap="round">
          {ROADS.map(([s, w, d], i) => <path key={i} transform={ORIGIN[s]} d={d} stroke="#d9dbe5" strokeWidth={w + 5} />)}
          {ROADS.map(([s, w, d], i) => <path key={i} transform={ORIGIN[s]} d={d} stroke="#fff" strokeWidth={w} />)}
        </g>
        <path d="M0,1140 1447,616" stroke="#d3e3d6" strokeWidth="8" />
        <path d="M0,1140 1447,616" stroke="#f3f6f3" strokeWidth="3" />
        <path transform={ORIGIN.B3} d="M390,470 440,455 425,640 415,760 330,770 350,600Z M600,520 650,500 625,640 500,780 440,780 540,640Z" fill="#ffeeb4" />
        <g strokeLinecap="round">
          {HIGHWAYS.map(([s, w, d], i) => (
            <React.Fragment key={i}>
              <path transform={ORIGIN[s]} d={d} stroke="#f7cd70" strokeWidth={w + 7} />
              <path transform={ORIGIN[s]} d={d} stroke={w === 34 || w === 20 ? "#ffe69f" : "#ffedb2"} strokeWidth={w} />
            </React.Fragment>
          ))}
        </g>
      </g>

      {ARROWS.map(([x, y, a], i) => (
        <path key={i} transform={`translate(${x} ${y}) rotate(${a})`} d="M-5 0H4M1 -3.500L5 0 1 3.500" fill="none" stroke="#aab0cd" strokeWidth="1.800" />
      ))}

      <g stroke="#fff" strokeWidth="3" strokeLinejoin="round" className="[paint-order:stroke]">
        {STREETS.map(([t, x, y, a, size], i) => (
          <text key={i} transform={`translate(${x} ${y}) rotate(${a})`} dy="5" textAnchor="middle" className={`${STREET} ${size}`}>{t}</text>
        ))}
        <text transform="translate(170 203) rotate(-19)" dy="6" textAnchor="middle" className="fill-[#854b14] text-[17px]">Storrow Dr</text>
        {DISTRICTS.map(([t, x, y, a]) => (
          <text key={t} x={x} y={y} textAnchor={a} className="fill-[#8091aa] text-[19px] font-bold tracking-[6px]">{t}</text>
        ))}
      </g>
      {PINS.map(([x, y, c, g], i) => <MapPin key={i} x={x} y={y} color={c} glyph={g} />)}
      <g stroke="#fff" strokeLinejoin="round" className="[paint-order:stroke]">
        {PLACES.map(([t, x, y, a, c], i) => (
          <text key={i} x={x} y={y} textAnchor={a} strokeWidth={t === "Storrow" || t === "Lagoon" ? 0 : 3} className={`${c} text-[17px]`}>{t}</text>
        ))}
      </g>

      <Subway x={759} y={92} /><Subway x={775} y={92} small /><Subway x={759} y={259} />
      <Subway x={1001} y={279} /><Subway x={359} y={471} />
      <Subway x={693} y={250} small /><Subway x={505} y={279} small /><Subway x={291} y={348} small />
      <Train x={982} y={279} /><Train x={339} y={471} />
      <g transform="translate(1149 111)">
        <rect x="-8" y="-8" width="16" height="16" rx="1" fill="#2bb8f5" stroke="#fff" />
        <path d="M-2 -6h4v2h2v3l2 .5 -1.500 3h-9l-1.500 -3 2 -.5v-3h2zM-5.500 4.500h11v1.500h-11z" fill="#fff" />
        <path d="M-2.500 -2.500h5v1.500h-5z" fill="#2bb8f5" />
      </g>
      <Shield x={631} y={464} n="90" /><Shield x={820} y={516} n="90" /><Shield x={883} y={519} n="90" />
      <Shield x={837} y={413} n="93" /><Shield x={1085} y={143} n="93" /><Shield x={1140} y={454} n="90" />
      <Shield x={4} y={462} n="90" />
      <rect x="454" y="417" width="22" height="17" rx="8.500" fill="#fff" stroke="#6c6c6c" strokeWidth="1.300" />
      <text x="465" y="430" textAnchor="middle" className="fill-[#444] text-[12px]">28</text>
    </svg>
  );
}

const TOOLS: { label: string; icon: React.ReactNode }[] = [
  { label: "Stop drawing", icon: <Hand className="size-[22px] -rotate-12 text-[#777]" strokeWidth={1.5} /> },
  { label: "Add a marker", icon: <svg viewBox="0 0 20 22" className="h-[22px] w-5"><path d="M10 1a6 6 0 0 1 6 6q0 3-4 7l-1 7h-2l-1-7q-4-4-4-7a6 6 0 0 1 6-6z" fill="#b9b9b9" stroke="#8d8d8d" strokeWidth="1.500" /></svg> },
  { label: "Draw a line", icon: <svg viewBox="0 0 24 20" className="h-5 w-6"><path d="M2 17L8 8l6 5 8-10" fill="none" stroke="#8d8d8d" strokeWidth="2" /><path d="M1 16h2v2H1zM7 7h2v2H7zM13 12h2v2h-2zM21 2h2v2h-2z" fill="#777" /></svg> },
  { label: "Draw a rectangle", icon: <svg viewBox="0 0 20 20" className="size-5"><rect x="2.500" y="2.500" width="15" height="15" fill="#b5b5b5" stroke="#929292" strokeWidth="2" /></svg> },
  { label: "Draw a circle", icon: <svg viewBox="0 0 20 22" className="h-[22px] w-5"><circle cx="10" cy="10" r="7.500" fill="#b5b5b5" stroke="#9a9a9a" strokeWidth="1.500" /><path d="M7 21h6" stroke="#666" /></svg> },
  { label: "Draw a shape", icon: <svg viewBox="0 0 22 22" className="size-[22px]"><path d="M2 3L9 9L20 5L18 12L8 18Z" fill="#8a8a8a" stroke="#0a0a0a" strokeWidth="2.500" strokeLinejoin="round" /><path d="M8 21.500h6" stroke="#444" /></svg> },
];

const CARD = "bg-white shadow-[0_1px_4px_rgba(0,0,0,0.3)] rounded-sm";

function MapPanel() {
  const [view, setView] = React.useState("Map");
  const [tool, setTool] = React.useState("Draw a shape");
  return (
    <section aria-label="Map" className="relative w-1/2 overflow-hidden">
      <CityMap />

      <div className={`absolute top-[14px] left-3 flex h-[54px] text-2xl ${CARD}`}>
        {["Map", "Satellite"].map((v) => (
          <button
            key={v}
            type="button"
            onClick={() => setView(v)}
            className={`px-[23px] first:border-r first:border-gray-200 ${view === v ? "font-medium text-black" : "text-[#565656]"}`}
          >
            {v}
          </button>
        ))}
      </div>

      <div className="absolute top-[6px] left-[259px] flex">
        {TOOLS.map(({ label, icon }) => (
          <button
            key={label}
            type="button"
            aria-label={label}
            aria-pressed={tool === label}
            onClick={() => setTool(label)}
            className="flex h-8 w-8 items-center justify-center border-r border-[#d8e4ee] bg-white shadow-[0_1px_4px_rgba(0,0,0,0.3)] last:border-0"
          >
            {icon}
          </button>
        ))}
      </div>

      <button type="button" aria-label="Toggle fullscreen" className={`absolute top-[14px] right-3 flex h-[52px] w-[54px] items-center justify-center ${CARD}`}>
        <svg viewBox="0 0 24 24" className="size-6" fill="none" stroke="#666" strokeWidth="3"><path d="M1.500 8V1.500H8M16 1.500h6.500V8M22.500 16v6.500H16M8 22.500H1.500V16" /></svg>
      </button>

      <div className="absolute right-3 bottom-[34px] flex w-[54px] flex-col gap-[42px]">
        <button type="button" aria-label="Street View" className={`flex h-[54px] items-center justify-center ${CARD}`}>
          <svg viewBox="0 0 24 42" className="h-[42px] w-6" stroke="#7d6a45" strokeWidth="1">
            <path d="M6 15Q12 12 18 15L22 28 19 30 17 24V40H13V30H11V40H7V24L4 30 2 28Z" fill="#fbbc3a" />
            <path d="M8 15h8l-4 6z" fill="#e08537" stroke="none" />
            <circle cx="12" cy="8" r="6.500" fill="#fbbc3a" />
          </svg>
        </button>
        <div className={`flex flex-col ${CARD}`}>
          <button type="button" aria-label="Zoom in" className="flex h-[54px] items-center justify-center">
            <svg viewBox="0 0 24 24" className="size-6"><path d="M12 0v24M0 12h24" stroke="#666" strokeWidth="5.500" /></svg>
          </button>
          <button type="button" aria-label="Zoom out" className="flex h-[54px] items-center justify-center">
            <svg viewBox="0 0 24 24" className="size-6"><path d="M0 12h24" stroke="#666" strokeWidth="5.500" /></svg>
          </button>
        </div>
      </div>

      <a href="#google" className="absolute bottom-[2px] left-2 text-[26px] leading-8 font-bold [text-shadow:0_0_2px_white,0_0_2px_white]" style={{ fontFamily: "Lato, sans-serif" }}>
        <span className="text-[#4285f4]">G</span>
        <span className="text-[#ea4335]">o</span>
        <span className="text-[#fbbc05]">o</span>
        <span className="text-[#4285f4]">g</span>
        <span className="text-[#34a853]">l</span>
        <span className="text-[#ea4335]">e</span>
      </a>

      <div className="absolute right-0 bottom-0 flex h-5 items-center gap-[17px] bg-[#f5f5f5]/70 px-2 text-lg leading-5 text-[#333]">
        <span>Map data ©2020 Google</span>
        <a href="#terms">Terms of Use</a>
        <a href="#report">Report a map error</a>
      </div>
    </section>
  );
}

export default function App() {
  return (
    <div className="min-h-screen bg-[#edeae1] text-black" style={{ fontFamily: "Roboto, sans-serif" }}>
      <div className="pt-0.5 pr-1 pl-0.5">
        <header className="flex h-[86px] items-center bg-[#4155b3] px-[22px]">
          <h1 className="text-[26px] leading-8 font-bold text-white">Solar Map</h1>
        </header>
      </div>
      <main className="flex flex-col items-center pr-1.5 pl-1">
        <form className="flex w-1/5 flex-col items-center pt-[17px]" onSubmit={(e) => e.preventDefault()}>
          <div className="flex w-full flex-col border-b-2 border-[#4155b3]">
            <label htmlFor="address" className="text-base leading-6 text-[#4155b3]">
              Search an Address <span className="text-[#ff4081]">*</span>
            </label>
            <input id="address" required defaultValue="54 Boylston" className="h-[41px] w-full bg-transparent text-[21px] outline-none" />
          </div>
          <button type="submit" className="mt-[26px] h-12 w-1/2 rounded-md bg-[#ff4382] text-lg font-bold text-white shadow-[0_2px_5px_rgba(0,0,0,0.4)]">
            Search
          </button>
        </form>
        <h2 className="mt-[26px] text-[26px] leading-[30px] font-bold">Draw a polygon on the map below to see its power output.</h2>
        <h2 className="mt-[30px] mb-6 text-[26px] leading-[30px] font-bold">Area's Nominal Power: 0 kWh/day</h2>
        <MapPanel />
      </main>
    </div>
  );
}
